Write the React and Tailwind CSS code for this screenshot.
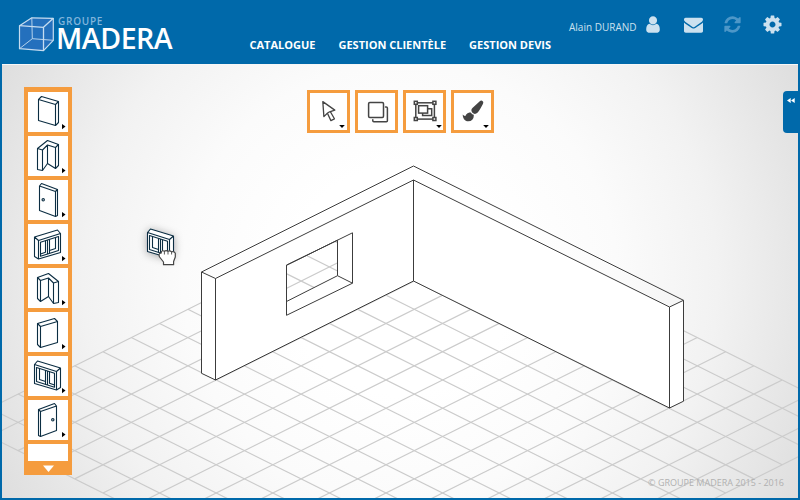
import React from "react";

const STEP_X = 28.3;
const STEP_Y = 14.13;
const ORIGIN = { x: 414.3, y: 309.3 };

/* Floor coordinates: u runs down-right, v runs down-left. */
const floorPoint = (u, v) => ({
  x: ORIGIN.x + ((u - v) / 2) * STEP_X,
  y: ORIGIN.y + ((u + v) / 2) * STEP_Y,
});

const gridLines = [];
for (let i = -8; i <= 24; i += 2) {
  gridLines.push([floorPoint(i, -8), floorPoint(i, 24)]);
  gridLines.push([floorPoint(-8, i), floorPoint(24, i)]);
}

function Scene() {
  return (
    <svg className="absolute inset-0 h-full w-full" viewBox="2 64 796 434" fill="none">
      <g stroke="#cbcbcb" strokeWidth="1.2">
        {gridLines.map(([a, b], i) => (
          <line key={i} x1={a.x} y1={a.y} x2={b.x} y2={b.y} />
        ))}
      </g>
      <g stroke="#3c3c3c" strokeLinejoin="round">
        <path
          fill="#fff"
          fillRule="evenodd"
          d="M215.5 278.5L413.5 180V281L215.5 380ZM286.5 265.2V301.5L337.5 275.7V240.2Z"
        />
        <path fill="#fff" d="M201.5 272L215.5 278.5V380L201.5 373.3Z" />
        <path fill="#fff" d="M413.5 180L669.5 307V408L413.5 281Z" />
        <path fill="#fff" d="M669.5 307L683.5 300.3V401.2L669.5 408Z" />
        <path d="M201.5 272L413.5 166L683.5 300.3" />
        <path d="M286.5 265.2L352.5 232.8V283.2L286.5 315.3Z" />
        <path d="M337.5 275.7L352.5 283.2" />
      </g>
    </svg>
  );
}

const ICONS = {
  wall: (
    <path d="M10.5 7.5L13.5 4.5L30.5 9.5L27.5 12.5ZM10.5 7.5V28.5L27.5 33.5V12.5M27.5 33.5L30.5 30.5V9.5" />
  ),
  corner: (
    <path d="M9.5 12.5L19.5 4.5L30.5 8.5L27.5 11.5L19.5 9L14.5 14ZM9.5 12.5V33.5L14.5 34.5V14M14.5 34.5L19.5 27.5V9M19.5 27.5L27.5 32.5V11.5M27.5 32.5L30.5 29.5V8.5" />
  ),
  door: (
    <>
      <path d="M11.5 6L13.5 3.5L29.5 9.5L27.5 11.5ZM11.5 6V30.5L27.5 36.5V11.5M27.5 36.5L29.5 35.5V9.5" />
      <circle cx="15.2" cy="19.8" r="1.2" />
    </>
  ),
  window: (
    <>
      <path d="M6.5 13L29.5 6L32.5 9.5L10.5 16.5ZM6.5 13V32.5L10.5 35V16.5M10.5 35L32.5 28.5V9.5" />
      <path d="M12.5 18.3L30.5 12.5V26.5L12.5 32.3Z" />
      <path d="M19.5 16V30M21.5 15.4V29.4M17.5 16.7V28.2L12.5 30M27.5 13.5V24.6L21.5 26.6" />
    </>
  ),
};

function PartIcon({ name, flip, dy = 0, fill = "none" }) {
  const shift = name === "window" ? 39 : 40;
  const transform = flip ? `translate(${shift} ${dy}) scale(-1 1)` : `translate(0 ${dy})`;
  return (
    <g transform={transform} stroke="#0b2d42" strokeWidth="1.1" fill={fill} strokeLinejoin="round">
      {ICONS[name]}
    </g>
  );
}

const parts = [
  { name: "wall" },
  { name: "corner" },
  { name: "door" },
  { name: "window" },
  { name: "corner", flip: true, dy: 1 },
  { name: "wall", flip: true, dy: 2 },
  { name: "window", flip: true, dy: -1 },
  { name: "door", flip: true },
];

function Palette() {
  return (
    <aside className="ml-[22px] mt-[23px] flex h-[388px] w-12 shrink-0 flex-col items-center gap-1 bg-[#f59c3e] pt-[5px]">
      {parts.map((part, i) => (
        <button key={i} className="block h-10 w-10 shrink-0 bg-white">
          <svg className="block h-10 w-10" viewBox="0 0 40 40">
            <PartIcon {...part} />
            <path d="M34 32L37.5 34.5L34 37.2Z" fill="#000" />
          </svg>
        </button>
      ))}
      <div className="h-[17px] w-10 shrink-0 bg-white" />
      <svg className="h-2 w-[11px] shrink-0" viewBox="0 0 11 8">
        <path d="M0 0.5H11L5.5 7Z" fill="#fff" />
      </svg>
    </aside>
  );
}

const tools = [
  {
    menu: 35,
    art: (
      <g fill="#fff" stroke="#444" strokeWidth="1.3" strokeLinejoin="round">
        <path d="M20.3 23L23.9 30.6L27.4 28.8L23.4 21.7" />
        <path d="M15.8 11.6L27.8 20.1L22.6 21.8L20.6 23L16.9 26.6Z" />
      </g>
    ),
  },
  {
    art: (
      <g fill="none" stroke="#444" strokeWidth="1.5" strokeLinejoin="round" strokeLinecap="round">
        <rect x="13.6" y="12.6" width="14.9" height="14.9" rx="1.2" />
        <path d="M30.5 17H31.3Q32.4 17 32.4 18V30.7Q32.4 31.7 31.4 31.7H18.8Q17.8 31.7 17.8 30.7V29.8" />
      </g>
    ),
  },
  {
    menu: 36,
    art: (
      <g fill="#fff" stroke="#444" strokeWidth="1.5">
        <rect x="12.8" y="12.8" width="18.6" height="16.3" />
        <path d="M24.7 18.7H28.7V25.4H19.6V23" />
        <rect x="15.6" y="15.7" width="9" height="7.4" />
        <rect x="11.3" y="11.3" width="3" height="3" />
        <rect x="29.9" y="11.3" width="3" height="3" />
        <rect x="11.3" y="27.5" width="3" height="3" />
        <rect x="29.9" y="27.5" width="3" height="3" />
      </g>
    ),
  },
  {
    menu: 35,
    art: (
      <path
        transform="translate(11.7 10.6) scale(.0115)"
        fill="#444"
        d="M1615 0q70 0 122.5 46.5t52.5 116.5q0 63-45 151-332 629-465 752-97 91-218 91-126 0-216.5-92.5t-90.5-219.5q0-128 92-212l638-579q59-54 130-54zm-909 1034q39 76 106.5 130t150.5 76l1 71q4 213-129.5 347t-348.5 134q-123 0-218-46.5t-152.5-127.5-86.5-183-29-220q7 5 41 30t62 44.5 59 36.5 46 17q41 0 55-37 25-66 57.5-112.5t69.5-76 88-47.5 103-25.5 125-10.5z"
      />
    ),
  },
];

function Toolbar() {
  return (
    <div className="ml-[235px] mt-[26px] flex gap-[5px]">
      {tools.map((tool, i) => (
        <button key={i} className="block h-[43px] w-[43px] bg-white">
          <svg className="block h-[43px] w-[43px]" viewBox="0 0 43 43">
            <rect x="1.5" y="1.5" width="40" height="40" fill="#fff" stroke="#f59c3e" strokeWidth="3" />
            {tool.art}
            {tool.menu && (
              <path transform={`translate(${tool.menu} 35)`} d="M-2.8 0H2.8L0 3Z" fill="#000" />
            )}
          </svg>
        </button>
      ))}
    </div>
  );
}

function Glyph({ d, className }) {
  return (
    <svg className={className} viewBox="0 0 1792 1792" fill="currentColor">
      <path d={d} />
    </svg>
  );
}

const USER =
  "M1536 1399q0 109-62.5 187t-150.5 78h-854q-88 0-150.5-78t-62.5-187q0-85 8.5-160.5t31.5-152 58.5-131 94-89 134.5-34.5q131 128 313 128t313-128q76 0 134.5 34.5t94 89 58.5 131 31.5 152 8.5 160.5zm-256-887q0 159-112.5 271.5t-271.5 112.5-271.5-112.5-112.5-271.5 112.5-271.5 271.5-112.5 271.5 112.5 112.5 271.5z";
const ENVELOPE =
  "M1792 710v794q0 66-47 113t-113 47h-1472q-66 0-113-47t-47-113v-794q44 49 101 87 362 246 497 345 57 42 92.5 65.5t94.5 48 110 24.5h2q51 0 110-24.5t94.5-48 92.5-65.5q170-123 498-345 57-39 100-87zm0-294q0 79-49 151t-122 123q-376 261-468 325-10 7-42.5 31t-54 38.5-52 32.5-57.5 27-50 9h-2q-23 0-50-9t-57.5-27-52-32.5-54-38.5-42.5-31q-91-64-262-182.5t-205-142.5q-62-42-117-115.5t-55-136.5q0-78 41.5-130t118.5-52h1472q65 0 112.5 47t47.5 113z";
const REFRESH =
  "M1639 1056q0 5-1 7-64 268-268 434.5t-478 166.5q-146 0-282.5-55t-243.5-157l-129 129q-19 19-45 19t-45-19-19-45v-448q0-26 19-45t45-19h448q26 0 45 19t19 45-19 45l-137 137q71 66 161 102t187 36q134 0 250-65t186-179q11-17 53-117 8-23 30-23h192q13 0 22.5 9.5t9.5 22.5zm25-800v448q0 26-19 45t-45 19h-448q-26 0-45-19t-19-45 19-45l138-138q-148-137-349-137-134 0-250 65t-186 179q-11 17-53 117-8 23-30 23h-199q-13 0-22.5-9.5t-9.5-22.5v-7q65-268 270-434.5t480-166.5q146 0 284 55.5t245 156.5l130-129q19-19 45-19t45 19 19 45z";
const COG =
  "M1152 896q0-106-75-181t-181-75-181 75-75 181 75 181 181 75 181-75 75-181zm512-109v222q0 12-8 23t-20 13l-185 28q-19 54-39 91 35 50 107 138 10 12 10 25t-9 23q-27 37-99 108t-94 71q-12 0-26-9l-138-108q-44 23-91 38-16 136-29 186-7 28-36 28h-222q-14 0-24.5-8.5t-11.5-21.5l-28-184q-49-16-90-37l-141 107q-10 9-25 9-14 0-25-11-126-114-165-168-7-10-7-23 0-12 8-23 15-21 51-66.5t54-70.5q-27-50-41-99l-183-27q-13-2-21-12.5t-8-23.5v-222q0-12 8-23t19-13l186-28q14-46 39-92-40-57-107-138-10-12-10-24 0-10 9-23 26-36 98.5-107.5t94.5-71.5q13 0 26 10l138 107q44-23 91-38 16-136 29-186 7-28 36-28h222q14 0 24.5 8.5t11.5 21.5l28 184q49 16 90 37l142-107q9-9 24-9 13 0 25 10 129 119 165 170 7 8 7 22 0 12-8 23-15 21-51 66.5t-54 70.5q26 50 41 98l183 28q13 2 21 12.5t8 23.5z";

function Header() {
  return (
    <header className="flex h-16 shrink-0 text-white">
      <div className="flex w-[249.5px] shrink-0 pl-[18px] pt-4">
        <svg className="h-9 w-9 shrink-0" viewBox="18 16 36 36" stroke="#c5dcf0" strokeLinejoin="round">
          <path d="M19.5 25.7L31.8 17.8L53.3 18.3V40.3L43.5 50.7L19.5 48.7Z" fill="#2470bd" strokeWidth="1.2" />
          <path d="M31.8 17.8L32.3 38.7L53.3 40.3M32.3 38.7L19.5 48.7" fill="none" strokeWidth="0.9" />
          <path d="M19.5 25.7L43.5 27.3V50.7M43.5 27.3L53.3 18.3" fill="none" strokeWidth="1.3" />
        </svg>
        <div className="ml-[2px] flex flex-col whitespace-nowrap">
          <span className="ml-[2px] h-[9px] text-[10px] font-semibold leading-[11px] tracking-[0.75px] text-[#80b5dc]">GROUPE</span>
          <span className="text-[28.5px] font-semibold leading-[26px] tracking-[-0.45px]">MADERA</span>
        </div>
      </div>
      <nav className="flex w-[319.5px] shrink-0 gap-[23px] whitespace-nowrap pt-[37px] text-[11px] font-bold leading-4">
        <a>CATALOGUE</a>
        <a>GESTION CLIENTÈLE</a>
        <a>GESTION DEVIS</a>
      </nav>
      <div className="flex h-[49px] items-center text-[#cce1ef]">
        <span className="w-[74px] whitespace-nowrap pt-[5px] text-[10px] leading-4">Alain DURAND</span>
        <Glyph d={USER} className="h-[19px] w-5" />
        <Glyph d={ENVELOPE} className="ml-[20.5px] h-[19px] w-[19px]" />
        <Glyph d={REFRESH} className="ml-[20.5px] h-[19px] w-[19px] text-[#4d97c8]" />
        <Glyph d={COG} className="ml-5 h-[21px] w-[21px]" />
      </div>
    </header>
  );
}

function DraggedPart() {
  return (
    <svg className="absolute left-[133px] top-[150px] h-[64px] w-[56px]" viewBox="135 214 56 64">
      <defs>
        <filter id="glow" x="-50%" y="-50%" width="200%" height="200%">
          <feDropShadow dx="0" dy="1" stdDeviation="4" floodColor="#000" floodOpacity="0.35" />
        </filter>
      </defs>
      <g filter="url(#glow)">
        <g transform="translate(141 223)">
          <path d="M6.5 13L9.5 6L32.5 13V32.5L28.5 35L6.5 28.5Z" fill="#fff" />
          <PartIcon name="window" flip />
        </g>
      </g>
      <path
        d="M163.5 264.7V262L159.6 257Q158.4 254.7 159.7 253.4L161.3 253V251.8Q162.5 250 164.4 251.3Q166 249.8 168 251.3Q169.8 250 171.6 251.8Q174.2 251 175.3 253.2V257L173.6 261.5V264.7Z"
        fill="#fff"
        stroke="#454545"
        strokeWidth="1.2"
        strokeLinejoin="round"
      />
      <path d="M164.4 251.5V254.5M168 251.5V254.5M171.6 252V254.5" stroke="#454545" strokeWidth="0.9" />
    </svg>
  );
}

export default function App() {
  return (
    <div className="flex h-[500px] w-[800px] flex-col overflow-hidden bg-[#0069aa] font-['Open_Sans',sans-serif]">
      <Header />
      <main className="relative mx-[2px] mb-[2px] flex flex-1 overflow-hidden bg-[radial-gradient(circle_at_center,#ffffff_25%,#fbfbfb_48%,#f2f2f2_70%,#e6e6e6_88%,#dedede_100%)] shadow-[inset_0_1px_0_#f7f7f7]">
        <Scene />
        <DraggedPart />
        <div className="relative flex w-full items-start">
          <Palette />
          <Toolbar />
          <div className="flex-1" />
          <button className="mt-[27px] flex h-[42px] w-[15px] justify-center rounded-l-[4px] bg-[#0069aa] pt-[7px]">
            <svg className="h-[5px] w-[8px]" viewBox="0 0 8 5" fill="#fff">
              <path d="M3.7 0V5L0 2.5ZM7.7 0V5L4 2.5Z" />
            </svg>
          </button>
          <footer className="absolute bottom-[7px] right-[14px] whitespace-nowrap text-[9px] leading-4 text-[#b0b0b0]">
            © GROUPE MADERA 2015 - 2016
          </footer>
        </div>
      </main>
    </div>
  );
}
